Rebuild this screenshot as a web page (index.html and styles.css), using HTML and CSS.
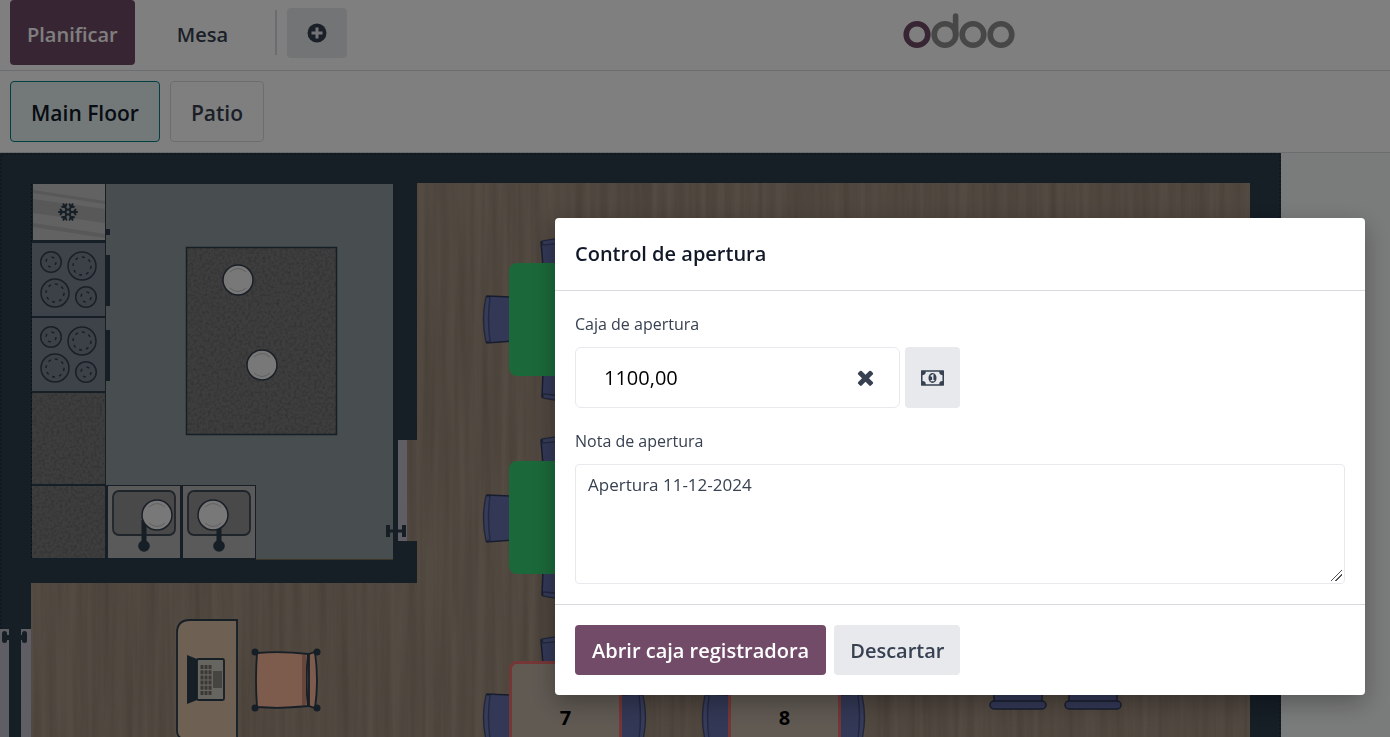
FILE: index.html
```html
<!DOCTYPE html>
<html lang="es">
<head>
<meta charset="utf-8">
<title>Odoo - Punto de venta</title>
<link rel="stylesheet" href="styles.css">
</head>
<body>
<div class="pos">
  <header class="topbar">
    <button class="btn btn-primary btn-tall" type="button">Planificar</button>
    <button class="btn btn-plain btn-tall" type="button">Mesa</button>
    <span class="divider"></span>
    <button class="btn btn-secondary btn-icon" type="button" aria-label="Nuevo">
      <svg width="20" height="20" viewBox="0 0 20 20"><circle cx="10" cy="10" r="9.5" fill="#374151"/><path d="M10 4.500v11M4.500 10h11" stroke="#e7e9ed" stroke-width="3"/></svg>
    </button>
    <svg class="logo" width="112" height="40" viewBox="0 0 112 40" role="img" aria-label="odoo" fill="none" stroke-width="5.600">
      <circle cx="14" cy="21.500" r="10.800" stroke="#714b67"/>
      <g stroke="#8f8f8f"><circle cx="42" cy="21.500" r="10.800"/><circle cx="70" cy="21.500" r="10.800"/><circle cx="98" cy="21.500" r="10.800"/><path d="M52.600 3v18.500" stroke-linecap="round"/></g>
    </svg>
  </header>
  <nav class="floors">
    <button class="floor-tab active" type="button">Main Floor</button>
    <button class="floor-tab" type="button">Patio</button>
  </nav>
  <main class="floor">
    <svg class="plan" width="1281" height="584" viewBox="0 153 1281 584" aria-hidden="true">
      <defs>
        <filter id="grain" x="0" y="0" width="100%" height="100%" color-interpolation-filters="sRGB">
          <feTurbulence type="fractalNoise" baseFrequency="0.12 0.004" numOctaves="3" seed="4"/>
          <feColorMatrix values="0 0 0 0 0.25  0 0 0 0 0.2  0 0 0 0 0.14  0.35 0 0 0 -0.1"/>
          <feComposite in2="SourceGraphic" operator="in"/>
        </filter>
        <filter id="speckle" x="0" y="0" width="100%" height="100%" color-interpolation-filters="sRGB">
          <feTurbulence type="fractalNoise" baseFrequency="0.35" numOctaves="3" seed="9"/>
          <feColorMatrix values="0 0 0 0 0.1  0 0 0 0 0.1  0 0 0 0 0.1  0.5 0 0 0 -0.2"/>
          <feComposite in2="SourceGraphic" operator="in"/>
        </filter>
        <g id="burner-l" fill="#77828f" stroke="#333f4d" stroke-width="1.500"><circle r="14"/><circle r="9" fill="none" stroke-dasharray="3 4"/></g>
        <g id="burner-s" fill="#77828f" stroke="#333f4d" stroke-width="1.500"><circle r="10.300"/><circle r="5" fill="none" stroke-dasharray="3 4.800"/></g>
        <g id="stove">
          <rect width="73" height="73" fill="#7c8794"/>
          <use href="#burner-s" x="19" y="19"/><use href="#burner-l" x="50" y="23"/>
          <use href="#burner-l" x="23" y="50"/><use href="#burner-s" x="54" y="54"/>
          <rect x="74" y="12" width="4" height="51" fill="#2c3c4c"/>
        </g>
        <g id="sink">
          <rect width="72" height="72" fill="#b4b4b4"/>
          <rect x="5" y="5" width="62" height="44" rx="6" fill="#929292" stroke="#414b56" stroke-width="1.800"/>
        </g>
        <g id="tap" fill="#2c3c4c"><rect x="-2.500" y="-26" width="5" height="26"/><circle r="5.800"/></g>
        <g id="plate"><circle r="15" fill="#f0f0f0" stroke="#333f4d" stroke-width="1.500"/><path d="M-8-8q8-7 16 0M-8 8q8 7 16 0" fill="none" stroke="#c4c4c4"/></g>
        <g id="chair" stroke="#303a5c" stroke-width="1.500">
          <path d="M3 1L28 2V46L3 48Q-3 24 3 1Z" fill="#6670ac"/>
          <path d="M2 2Q-3 24 2 47L6 46Q3 24 6 2Z" fill="#6d77b4" stroke-opacity=".6"/>
        </g>
        <g id="handle" stroke="#2c3c4c" fill="none"><path d="M-8 0H8" stroke-width="3"/><path d="M-8-6V6M8-6V6" stroke-width="4"/></g>
      </defs>

      <rect y="153" width="1281" height="584" fill="#2c3c4c"/>
      <path d="M1 737V154H1280V737" fill="none" stroke="#1a2530" stroke-dasharray="2 2"/>
      <rect x="106" y="184" width="287" height="375" fill="#909c9f"/>
      <path d="M150 200h50v40h-50zM250 330h70v60h-70zM340 260h52v80h-52zM280 450h80v60h-80z" fill="#97a1a0" opacity=".2"/>
      <path d="M417 183H1250V737H31V583H417V541H407V440H417Z" fill="#a89686"/>
      <path d="M417 183H1250V737H31V583H417V541H407V440H417Z" fill="#000" filter="url(#grain)"/>
      <path d="M31.500 184V559" stroke="#1a2530" stroke-dasharray="2 2" fill="none"/>
      <path d="M256 559.500H393" stroke="#7b6a4c"/>

      <rect x="32" y="184" width="74" height="375" fill="#2c3c4c"/>
      <rect x="33" y="184" width="72" height="56" fill="#c4c4c4"/>
      <path d="M33 190L105 201V204L33 193ZM33 199L105 209V223L33 213ZM33 223L105 234V238L33 227Z" fill="#b0b0b0"/>
      <g transform="translate(68 212)" stroke="#2c3c4c" stroke-width="2" stroke-linecap="round" fill="none">
        <circle r="2.500"/>
        <path id="arm" d="M3 0H9M5.500 0L7.500-2.500M5.500 0L7.500 2.500"/><use href="#arm" transform="rotate(60)"/><use href="#arm" transform="rotate(120)"/><use href="#arm" transform="rotate(180)"/><use href="#arm" transform="rotate(240)"/><use href="#arm" transform="rotate(300)"/>
      </g>
      <rect x="106" y="229" width="4" height="6" fill="#2c3c4c"/>
      <use href="#stove" x="32" y="243"/>
      <use href="#stove" x="32" y="318"/>
      <path d="M32 393H105V484H32ZM32 486H105V558H32Z" fill="#7c7c7c"/>
      <path d="M32 393H105V484H32ZM32 486H105V558H32Z" filter="url(#speckle)"/>
      <rect x="106" y="485" width="150" height="74" fill="#2c3c4c"/>
      <use href="#sink" x="108" y="486"/><use href="#sink" x="183" y="486"/>
      <rect x="186.500" y="247.500" width="150" height="187" fill="#7c7c7c"/>
      <rect x="186.500" y="247.500" width="150" height="187" filter="url(#speckle)"/>
      <rect x="186.500" y="247.500" width="150" height="187" fill="none" stroke="#2c3c4c" stroke-width="1.500"/>
      <use href="#tap" x="144" y="546"/><use href="#tap" x="219" y="546"/>
      <use href="#plate" x="238" y="280"/><use href="#plate" x="262" y="365"/>
      <use href="#plate" x="157" y="515"/><use href="#plate" x="213" y="515"/>

      <rect x="398" y="440" width="9" height="101" fill="#c0bdcb"/>
      <use href="#handle" x="396" y="531"/>
      <path d="M0 629H9V737H0ZM21 629H31V737H21Z" fill="#c0bdcb"/>
      <g fill="#2c3c4c"><rect x="2" y="631" width="5" height="12" rx="2.500"/><rect x="22" y="631" width="5" height="12" rx="2.500"/><rect x="5" y="635" width="20" height="5"/></g>

      <path d="M237 620H190Q177 620 177 633V731Q177 740 190 740H237Z" fill="#dcc0a4" stroke="#2c3c4c" stroke-width="1.800"/>
      <path d="M187 655L197 659V700L187 704Z" fill="#2c3c4c"/>
      <rect x="197" y="659" width="27" height="41" rx="1.500" fill="#cfcbc0" stroke="#2c3c4c" stroke-width="1.800"/>
      <path d="M202 665V695M206 665V695M210 665V695" stroke="#77736b" stroke-width="3" stroke-dasharray="4 1.200"/>
      <rect x="213" y="671" width="9" height="17" fill="#8d8a83"/>
      <g stroke="#2c3c4c" stroke-width="1.800" fill="#fbb69a">
        <path d="M257 653Q282 651 308 654Q305 681 308 706Q282 709 257 707Q255 680 257 653Z"/>
        <path d="M304 655V705" stroke="#cf8f77" stroke-width="4"/>
        <path d="M309 654L315 652Q319 681 315 708L309 706Z"/>
        <g fill="#2c3c4c" stroke="none"><circle cx="255" cy="652" r="3.500"/><circle cx="255" cy="708" r="3.500"/><circle cx="317" cy="652" r="3.500"/><circle cx="317" cy="708" r="3.500"/></g>
      </g>

      <use href="#chair" x="484" y="295"/><use href="#chair" x="484" y="494"/><use href="#chair" x="484" y="693"/><use href="#chair" x="703" y="693"/>
      <use href="#chair" transform="translate(645 693) scale(-1 1)"/><use href="#chair" transform="translate(864 693) scale(-1 1)"/>
      <use href="#chair" transform="translate(589 239) rotate(90)"/><use href="#chair" transform="translate(589 437) rotate(90)"/><use href="#chair" transform="translate(589 637) rotate(90)"/>
      <use href="#chair" transform="translate(541 400) rotate(-90)"/><use href="#chair" transform="translate(541 598) rotate(-90)"/>
      <g fill="#6670ac" stroke="#303a5c" stroke-width="1.500">
        <path d="M994 680H1042V703H994ZM1069 680H1117V703H1069Z"/>
        <rect x="990" y="701" width="56" height="8" rx="4"/><rect x="1065" y="701" width="56" height="8" rx="4"/>
      </g>
    </svg>
    <button class="table table-1 occupied" type="button" aria-label="Mesa 1"></button>
    <button class="table table-4 occupied" type="button" aria-label="Mesa 4"></button>
    <button class="table table-7" type="button">7</button>
    <button class="table table-8" type="button">8</button>
  </main>
</div>

<div class="backdrop">
  <form class="modal" role="dialog" aria-labelledby="dialog-title">
    <div class="modal-header"><h1 id="dialog-title">Control de apertura</h1></div>
    <div class="modal-body">
      <label for="cash">Caja de apertura</label>
      <div class="cash-row">
        <div class="cash-field">
          <input id="cash" type="text" value="1100,00">
          <button class="clear" type="button" aria-label="Borrar">
            <svg width="23" height="23" viewBox="0 0 1792 1792" fill="#374151"><path d="M1490 1322q0 40-28 68l-136 136q-28 28-68 28t-68-28l-294-294-294 294q-28 28-68 28t-68-28l-136-136q-28-28-28-68t28-68l294-294-294-294q-28-28-28-68t28-68l136-136q28-28 68-28t68 28l294 294 294-294q28-28 68-28t68 28l136 136q28 28 28 68t-28 68l-294 294 294 294q28 28 28 68z"/></svg>
          </button>
        </div>
        <button class="btn btn-secondary money" type="button" aria-label="Monedas y billetes">
          <svg width="24" height="16" viewBox="0 0 24 16"><rect width="24" height="16" rx=".6" fill="#374151"/><path d="M5 1.600H19A3.500 3.500 0 0 0 22.400 5V11A3.500 3.500 0 0 0 19 14.400H5A3.500 3.500 0 0 0 1.600 11V5A3.500 3.500 0 0 0 5 1.600Z" fill="#e7e9ed"/><ellipse cx="12" cy="8" rx="4.200" ry="5.200" fill="#374151"/><path d="M10.200 6.300L12.300 4.800V10.500M10 10.800H14" fill="none" stroke="#e7e9ed" stroke-width="1.400"/></svg>
        </button>
      </div>
      <label for="note">Nota de apertura</label>
      <textarea id="note">Apertura 11-12-2024</textarea>
    </div>
    <div class="modal-footer">
      <button class="btn btn-primary" type="button">Abrir caja registradora</button>
      <button class="btn btn-secondary" type="button">Descartar</button>
    </div>
  </form>
</div>
</body>
</html>
```
FILE: styles.css
```css
* { box-sizing: border-box; }

body {
  margin: 0;
  overflow: hidden;
  font-family: "Open Sans", "Noto Sans", sans-serif;
  font-size: 17px;
  color: #374151;
}

button, input, textarea { font-family: inherit; color: inherit; }
button { cursor: pointer; }
svg { display: block; }

.pos {
  display: flex;
  flex-direction: column;
  height: 100vh;
  background: #fff;
}

.btn {
  display: flex;
  align-items: center;
  justify-content: center;
  height: 50px;
  padding: 0 16px;
  border: 0;
  border-radius: 4px;
  font-size: 20px;
  font-weight: 600;
  white-space: nowrap;
}
.btn-tall { height: 65px; padding-top: 3px; }
.btn-primary { padding-right: 17px; padding-left: 17px; background: #714b67; color: #fff; }
.btn-secondary { background: #e7e9ed; }
.btn-plain { padding-right: 32px; padding-left: 32px; background: transparent; }
.btn-icon { width: 60px; }

.topbar {
  display: flex;
  align-items: center;
  flex: none;
  padding: 0 27% 5px 10px;
  border-bottom: 1px solid #d8dadd;
}
.topbar .btn-plain { margin: 0 15px 0 10px; }
.divider {
  width: 2px;
  height: 45px;
  margin-right: 10px;
  background: #d8dadd;
}
.logo { margin-left: auto; }

.floors {
  display: flex;
  flex: none;
  gap: 10px;
  padding: 10px;
  border-bottom: 1px solid #d8dadd;
}
.floor-tab {
  height: 61px;
  padding: 2px 20px 0;
  border: 1px solid #d8dadd;
  border-radius: 4px;
  background: #fff;
  font-size: 21px;
  font-weight: 600;
}
.floor-tab.active {
  border-color: #017e84;
  background: #e6f2f3;
  color: #111827;
}

.floor {
  position: relative;
  flex: 1;
  overflow: hidden;
  background: #f5f9f7;
}

/* Tables are placed freely on the floor plan. */
.table {
  position: absolute;
  width: 113px;
  height: 113px;
  padding: 0;
  border: 3px solid #eb6d6d;
  border-radius: 8px;
  background: #c2b4a7;
  color: #000;
  font-size: 20px;
  font-weight: 700;
}
.table.occupied { border-color: #36d274; background: #36d274; }
.table-1 { left: 509px; top: 110px; }
.table-4 { left: 509px; top: 308px; }
.table-7 { left: 509px; top: 508px; }
.table-8 { left: 728px; top: 508px; }

.backdrop {
  position: fixed;
  inset: 0;
  display: flex;
  align-items: center;
  justify-content: flex-end;
  padding: 176px 25px 0;
  background: rgba(0, 0, 0, .5);
}

.modal {
  flex: 0 1 810px;
  border-radius: 4px;
  background: #fff;
  box-shadow: 0 8px 24px rgba(0, 0, 0, .3);
}
.modal-header {
  padding: 20px;
  border-bottom: 1px solid #d8dadd;
}
.modal-header h1 {
  margin: 0;
  font-size: 20px;
  line-height: 32px;
  font-weight: 600;
  color: #111827;
}
.modal-body {
  display: flex;
  flex-direction: column;
  gap: 10px;
  padding: 20px;
}
.modal-body label { font-size: 16px; line-height: 26px; }

.cash-row {
  display: flex;
  gap: 5px;
  margin-bottom: 10px;
}
.cash-field {
  display: flex;
  align-items: center;
  width: 325px;
  height: 61px;
  padding: 0 22px 0 28px;
  border: 1px solid #e7e9ed;
  border-radius: 6px;
}
.cash-field input {
  flex: 1;
  min-width: 0;
  padding: 0;
  border: 0;
  outline: 0;
  background: transparent;
  font-size: 20px;
  color: #000;
}
.clear { padding: 0; border: 0; background: transparent; }
.money { width: 55px; height: 61px; }

textarea {
  height: 120px;
  padding: 7px 12px;
  border: 1px solid #e7e9ed;
  border-radius: 4px;
  outline: 0;
  font-size: 17px;
  line-height: 26px;
  resize: vertical;
}
textarea::-webkit-resizer {
  background: linear-gradient(135deg, transparent 46%, #555 46% 53%, transparent 53% 68%, #555 68% 75%, transparent 75%) 2px 2px / 11px 11px no-repeat;
}

.modal-footer {
  display: flex;
  gap: 8px;
  padding: 20px;
  border-top: 1px solid #d8dadd;
}
```
